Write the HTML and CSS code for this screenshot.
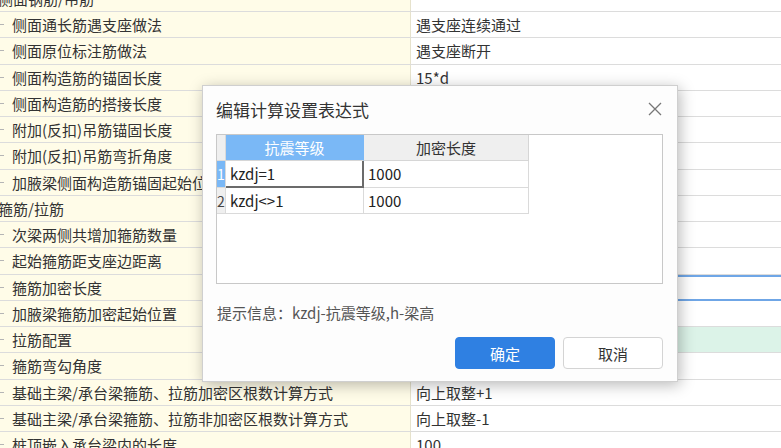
FILE: index.html
```html
<!DOCTYPE html>
<html lang="zh-CN">
<head>
    <meta charset="UTF-8">
    <title>计算设置</title>
    <link rel="stylesheet" href="styles.css">
</head>
<body>
    <div class="sheet">
        <div class="row group"><div class="name">侧面钢筋/吊筋</div><div class="val"></div></div>
        <div class="row"><div class="name">侧面通长筋遇支座做法</div><div class="val">遇支座连续通过</div></div>
        <div class="row"><div class="name">侧面原位标注筋做法</div><div class="val">遇支座断开</div></div>
        <div class="row"><div class="name">侧面构造筋的锚固长度</div><div class="val">15*d</div></div>
        <div class="row"><div class="name">侧面构造筋的搭接长度</div><div class="val">15*d</div></div>
        <div class="row"><div class="name">附加(反扣)吊筋锚固长度</div><div class="val">20*d</div></div>
        <div class="row"><div class="name">附加(反扣)吊筋弯折角度</div><div class="val">按规范计算</div></div>
        <div class="row"><div class="name">加腋梁侧面构造筋锚固起始位置</div><div class="val">支座边</div></div>
        <div class="row group"><div class="name">箍筋/拉筋</div><div class="val"></div></div>
        <div class="row"><div class="name">次梁两侧共增加箍筋数量</div><div class="val">0</div></div>
        <div class="row"><div class="name">起始箍筋距支座边距离</div><div class="val">50</div></div>
        <div class="row selected"><div class="name">箍筋加密长度</div><div class="val">按规范计算</div></div>
        <div class="row"><div class="name">加腋梁箍筋加密起始位置</div><div class="val">加腋端部</div></div>
        <div class="row green"><div class="name">拉筋配置</div><div class="val">按规范计算</div></div>
        <div class="row"><div class="name">箍筋弯勾角度</div><div class="val">135°</div></div>
        <div class="row"><div class="name">基础主梁/承台梁箍筋、拉筋加密区根数计算方式</div><div class="val">向上取整+1</div></div>
        <div class="row"><div class="name">基础主梁/承台梁箍筋、拉筋非加密区根数计算方式</div><div class="val">向上取整-1</div></div>
        <div class="row"><div class="name">桩顶嵌入承台梁内的长度</div><div class="val">100</div></div>
    </div>

    <div class="dialog">
        <div class="dlg-head">
            <span class="dlg-title">编辑计算设置表达式</span>
            <svg class="dlg-close" width="14" height="14" viewBox="0 0 14 14">
                <path d="M1 1L13 13M13 1L1 13" stroke="#777" stroke-width="1.3" fill="none"/>
            </svg>
        </div>
        <div class="grid-box">
            <div class="grid">
                <div class="corner"></div>
                <div class="hcell active">抗震等级</div>
                <div class="hcell">加密长度</div>

                <div class="rnum active">1</div>
                <div class="cell editing">kzdj=1</div>
                <div class="cell">1000</div>

                <div class="rnum">2</div>
                <div class="cell">kzdj&lt;&gt;1</div>
                <div class="cell">1000</div>
            </div>
        </div>
        <p class="hint">提示信息：kzdj-抗震等级,h-梁高</p>
        <div class="dlg-foot">
            <button class="btn primary">确定</button>
            <button class="btn">取消</button>
        </div>
    </div>
</body>
</html>
```

FILE: styles.css
```css
html {
font-family: "Noto Sans CJK SC", "Noto Sans", sans-serif;
}

body {
margin: 0;
width: 781px;
height: 448px;
overflow: hidden;
background-color: #fff;
color: #333;
font-size: 15px;
position: relative;
}

.sheet {
margin-top: -14.25px;
}

.row {
display: grid;
grid-template-columns: 411px 1fr;
height: 26.25px;
box-sizing: border-box;
border-bottom: 1px solid #dcdcdc;
}

.name {
background-color: #fffce8;
border-right: 1px solid #e6e2cc;
padding-left: 12px;
line-height: 25px;
white-space: nowrap;
overflow: hidden;
position: relative;
}

.name::before {
content: "";
position: absolute;
left: 0;
top: 12px;
width: 4px;
height: 1px;
background-color: #b5b5b5;
}

.group .name {
padding-left: 0;
text-indent: -2px;
}

.group .name::before {
display: none;
}

.val {
padding-left: 5px;
line-height: 25px;
white-space: nowrap;
overflow: hidden;
}

.selected .val {
border-top: 2px solid #6fa6e6;
border-bottom: 2px solid #6fa6e6;
margin-bottom: -1px;
line-height: 21px;
}

.green .val {
background-color: #dcf3e8;
}

/* dialog */
.dialog {
position: absolute;
left: 202px;
top: 85px;
width: 476px;
height: 297px;
box-sizing: border-box;
background-color: #fdfdfd;
border: 1px solid #cfcfcf;
box-shadow: 2px 3px 14px rgba(0, 0, 0, 0.28);
padding: 0 14px 0 13px;
}

.dlg-head {
height: 48px;
display: flex;
align-items: center;
justify-content: space-between;
}

.dlg-title {
font-size: 17px;
color: #333;
margin-top: -2px;
}

.dlg-close {
margin-right: 1px;
margin-top: -2px;
}

.grid-box {
height: 150px;
box-sizing: border-box;
border: 1px solid #c8c8c8;
background-color: #fff;
}

.grid {
display: grid;
grid-template-columns: 9px 138px 165px;
grid-template-rows: 26px 27px 26px;
}

.corner,
.rnum {
background-color: #efefef;
border-right: 1px solid #dadada;
border-bottom: 1px solid #dadada;
}

.rnum {
font-size: 14px;
line-height: 26px;
text-align: center;
overflow: hidden;
color: #444;
}

.rnum.active {
background-color: #7ab8f6;
color: #fff;
}

.hcell {
background-color: #efefef;
border-right: 1px solid #d6d6d6;
border-bottom: 1px solid #d6d6d6;
text-align: center;
line-height: 25px;
color: #333;
}

.hcell.active {
background-color: #7ab8f6;
color: #fff;
border-right-color: #7ab8f6;
}

.cell {
border-right: 1px solid #dadada;
border-bottom: 1px solid #dadada;
padding-left: 4px;
line-height: 26px;
color: #222;
}

.cell.editing {
border: 2px solid #6b6b6b;
border-left: none;
border-top: none;
line-height: 25px;
}

.hint {
margin: 18px 0 0 1px;
color: #555;
line-height: 21px;
}

.dlg-foot {
display: flex;
justify-content: flex-end;
gap: 8px;
margin-top: 14px;
}

.btn {
width: 100px;
height: 32px;
border: 1px solid #d4d4d4;
border-radius: 4px;
background-color: #fff;
font-family: "Noto Sans CJK SC", sans-serif;
font-size: 15px;
color: #333;
}

.btn.primary {
background-color: #2f80e2;
border-color: #2f80e2;
color: #fff;
}
```
